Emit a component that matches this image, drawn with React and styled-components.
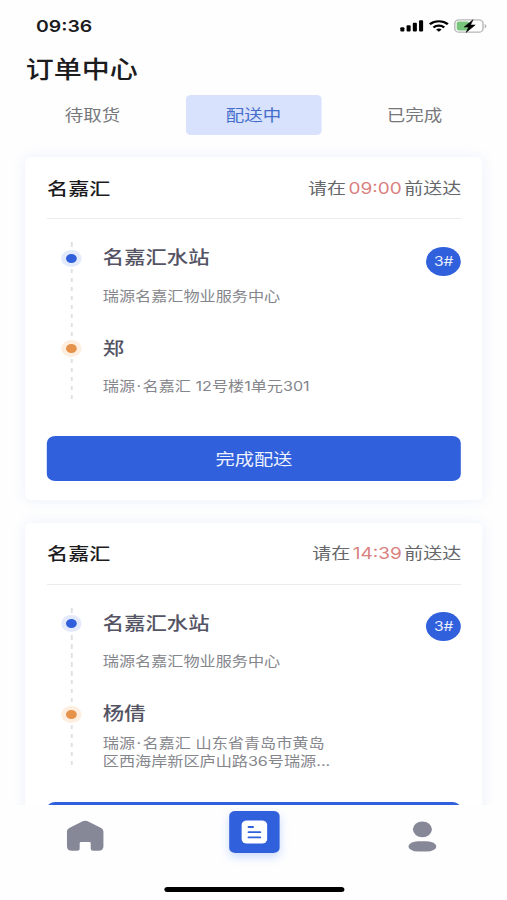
import React from "react";
import styled, { createGlobalStyle } from "styled-components";

const color = {
  primary: "#3160dc",
  primaryLight: "#d8e2fd",
  warning: "#e6924a",
  danger: "#d98080",
  dark: "#1c1c1e",
  text: "#545464",
  muted: "#85868c",
  icon: "#868897",
};

const GlobalStyle = createGlobalStyle`
  body {
    margin: 0;
    background: #fefefe;
    overflow: hidden;
  }

  * {
    box-sizing: border-box;
  }
`;

// the screen is laid out narrow and stretched to the full width
const Screen = styled.div`
  display: flex;
  flex-direction: column;
  width: 422.5px;
  height: 900px;
  overflow: hidden;
  background: #fefefe;
  color: ${color.dark};
  font-family: Inter, "Noto Sans CJK SC", sans-serif;
  white-space: nowrap;
  transform: scaleX(1.2);
  transform-origin: 0 0;
`;

const StatusBar = styled.div`
  display: flex;
  flex: none;
  align-items: center;
  justify-content: space-between;
  height: 51px;
  padding: 0 17px 0 30px;

  time {
    font-size: 16.2px;
    font-weight: 600;
  }
`;

const StatusIcons = styled.svg`
  display: block;
  width: 73px;
  height: 14px;
`;

const Title = styled.h1`
  flex: none;
  height: 34px;
  margin: 0;
  padding-left: 21.5px;
  font-size: 23.3px;
  font-weight: 500;
  line-height: 37px;
`;

const Tabs = styled.nav`
  display: grid;
  flex: none;
  grid-template-columns: repeat(3, 1fr);
  justify-items: center;
  height: 40px;
  margin: 10px 10px 0;
`;

const Tab = styled.a`
  width: 113.4px;
  height: 40px;
  border-radius: 4px;
  font-size: 15.4px;
  line-height: 42px;
  text-align: center;
  color: ${({ $active }) => ($active ? "#456dcb" : "#77787c")};
  background: ${({ $active }) => ($active ? color.primaryLight : "none")};
`;

const Orders = styled.main`
  display: flex;
  flex: 1;
  flex-direction: column;
  gap: 22.5px;
  min-height: 0;
  padding: 22px 20.5px 0 21.2px;
  overflow: hidden;
`;

const Card = styled.section`
  flex: none;
  height: 343px;
  padding: 0 17.7px;
  border-radius: 5px;
  background: #fff;
  box-shadow: 0 0 13px rgba(60, 105, 220, 0.09);

  .card__header {
    display: flex;
    align-items: center;
    justify-content: space-between;
    height: 62px;
    padding-bottom: 1px;
    border-bottom: 1px solid #ececef;
  }

  .card__title {
    margin: 0;
    padding-left: 0.4px;
    font-size: 17.6px;
    font-weight: 500;
  }

  .card__deadline {
    font-size: 15.8px;
    color: #66676b;
  }

  .card__deadline time {
    margin: 0 2.2px;
    color: ${color.danger};
  }

  .card__body {
    display: flex;
    align-items: flex-start;
    margin-top: 23px;
  }
`;

const Route = styled.div`
  display: flex;
  flex: 1;
  flex-direction: column;
  gap: 14.5px;
  background: repeating-linear-gradient(#dfe0e3 0 4.5px, transparent 4.5px 9px)
    19.8px 0 / 1.6px 157px no-repeat;
`;

const Stop = styled.div`
  display: grid;
  grid-template-columns: 41.2px 1fr;
  align-items: center;
  column-gap: 5.6px;

  .stop__name {
    font-size: 17.8px;
    font-weight: 500;
    line-height: 32px;
    color: ${color.text};
  }

  .stop__address {
    display: flex;
    grid-column: 2;
    align-items: center;
    height: 44px;
    font-size: 13.45px;
    line-height: 18.5px;
    color: ${color.muted};
    white-space: pre-line;
  }
`;

const Dot = styled.i`
  justify-self: center;
  width: 17px;
  height: 17px;
  border: 4px solid ${({ $end }) => ($end ? "#fdeee0" : "#e2eafb")};
  border-radius: 50%;
  background: ${({ $end }) => ($end ? color.warning : color.primary)};
`;

const Badge = styled.span`
  width: 29.2px;
  height: 29px;
  margin-top: 4.5px;
  border-radius: 50%;
  font-size: 13px;
  line-height: 29px;
  text-align: center;
  color: #e8eefd;
  background: ${color.primary};
`;

const Button = styled.button`
  display: block;
  width: 100%;
  height: 45px;
  margin-top: 27.5px;
  padding: 0 0 2px;
  border: 0;
  border-radius: 7px;
  font: inherit;
  font-size: 16px;
  color: #edf2ff;
  background: ${color.primary};
`;

const TabBar = styled.footer`
  display: flex;
  flex: none;
  flex-direction: column;
  align-items: center;
  justify-content: space-between;
  height: 95px;
  padding-bottom: 8px;
`;

const TabBarItems = styled.div`
  display: grid;
  grid-template-columns: repeat(3, 1fr);
  place-items: center;
  width: 100%;
  height: 62px;

  svg {
    display: block;
  }
`;

const OrdersButton = styled.div`
  display: grid;
  place-items: center;
  width: 42.4px;
  height: 42px;
  margin: -9px 0 0 1px;
  border-radius: 5px;
  background: ${color.primary};
  box-shadow: 0 4px 9px rgba(70, 130, 255, 0.28);
`;

const HomeIndicator = styled.div`
  width: 150px;
  height: 5px;
  margin-left: 1px;
  border-radius: 3px;
  background: #000;
`;

const orders = [
  {
    id: 1,
    time: "09:00",
    stops: [
      { name: "名嘉汇水站", address: "瑞源名嘉汇物业服务中心" },
      { name: "郑", address: "瑞源\u200a·\u200a名嘉汇 12号楼1单元301" },
    ],
  },
  {
    id: 2,
    time: "14:39",
    stops: [
      { name: "名嘉汇水站", address: "瑞源名嘉汇物业服务中心" },
      {
        name: "杨倩",
        address: "瑞源\u200a·\u200a名嘉汇 山东省青岛市黄岛\n区西海岸新区庐山路36号瑞源...",
      },
    ],
  },
];

const Order = ({ time, stops }) => {
  return (
    <Card>
      <div className="card__header">
        <h2 className="card__title">名嘉汇</h2>
        <span className="card__deadline">
          请在<time>{time}</time>前送达
        </span>
      </div>
      <div className="card__body">
        <Route>
          {stops.map((stop, index) => (
            <Stop key={index}>
              <Dot $end={index > 0} />
              <span className="stop__name">{stop.name}</span>
              <span className="stop__address">{stop.address}</span>
            </Stop>
          ))}
        </Route>
        <Badge>3#</Badge>
      </div>
      <Button>完成配送</Button>
    </Card>
  );
};

const App = () => {
  return (
    <>
      <GlobalStyle />
      <Screen>
        <StatusBar>
          <time>09:36</time>
          <StatusIcons viewBox="0 0 73 14">
            <rect x="0.6" y="8.3" width="3.4" height="4.2" rx="0.9" />
            <rect x="5.8" y="6.3" width="3.4" height="6.2" rx="0.9" />
            <rect x="11" y="3.8" width="3.4" height="8.7" rx="0.9" />
            <rect x="16.2" y="1.2" width="3.4" height="11.3" rx="0.9" />
            <g fill="none" stroke="#000" strokeWidth="2.1">
              <path d="M25.2 5.3a10.8 10.8 0 0 1 15 0" />
              <path d="M28.2 8.4a6.6 6.6 0 0 1 9 0" />
            </g>
            <path d="M32.7 12.8l-2.3-2.4a3.5 3.5 0 0 1 4.6 0z" />
            <rect
              x="46"
              y="0.9"
              width="23.5"
              height="12.2"
              rx="3.4"
              fill="#fff"
              stroke="#b5b7b5"
              strokeWidth="1.2"
            />
            <rect x="47.6" y="2.4" width="10.4" height="9.2" rx="1.8" fill="#78c67c" />
            <path d="M70.9 5v4.4q1.4-.6 1.4-2.2t-1.4-2.2z" fill="#b5b7b5" />
            <path
              d="M61.2 0.8l-7.4 7.2h3.8l-2.2 5.4 7.6-7.4h-3.9z"
              stroke="#000"
              strokeWidth="0.5"
            />
          </StatusIcons>
        </StatusBar>
        <Title>订单中心</Title>
        <Tabs>
          <Tab>待取货</Tab>
          <Tab $active>配送中</Tab>
          <Tab>已完成</Tab>
        </Tabs>
        <Orders>
          {orders.map((order) => (
            <Order key={order.id} {...order} />
          ))}
        </Orders>
        <TabBar>
          <TabBarItems>
            <svg width="39" height="32" viewBox="0 0 39 32">
              <path
                d="M18.3 1.1q1.700-.8 3.400 0l11.600 6.900q1.900 1.200 1.900 3.500V26.200q0 4.600-4.200 4.600h-4.100q-2.300 0-2.300-2.200V23.200q0-1.200-1.200-1.200h-6.800q-1.200 0-1.200 1.200v5.400q0 2.200-2.300 2.200H9q-4.200 0-4.200-4.600V11.500q0-2.300 1.900-3.500z"
                fill={color.icon}
              />
            </svg>
            <OrdersButton>
              <svg width="22" height="24" viewBox="0 0 22 24">
                <rect x="0.3" y="0.5" width="21.4" height="23" rx="4.5" fill="#fff" />
                <path
                  d="M6.2 7h3.6M6.2 12.2h9.6M6.2 17.4h9.6"
                  stroke={color.primary}
                  strokeWidth="1.8"
                  strokeLinecap="round"
                />
              </svg>
            </OrdersButton>
            <svg width="24" height="31" viewBox="0 0 24 31">
              <circle cx="12" cy="8.3" r="7.9" fill={color.icon} />
              <rect x="0.4" y="20.3" width="23.2" height="10.3" rx="8" fill={color.icon} />
            </svg>
          </TabBarItems>
          <HomeIndicator />
        </TabBar>
      </Screen>
    </>
  );
};

export default App;
